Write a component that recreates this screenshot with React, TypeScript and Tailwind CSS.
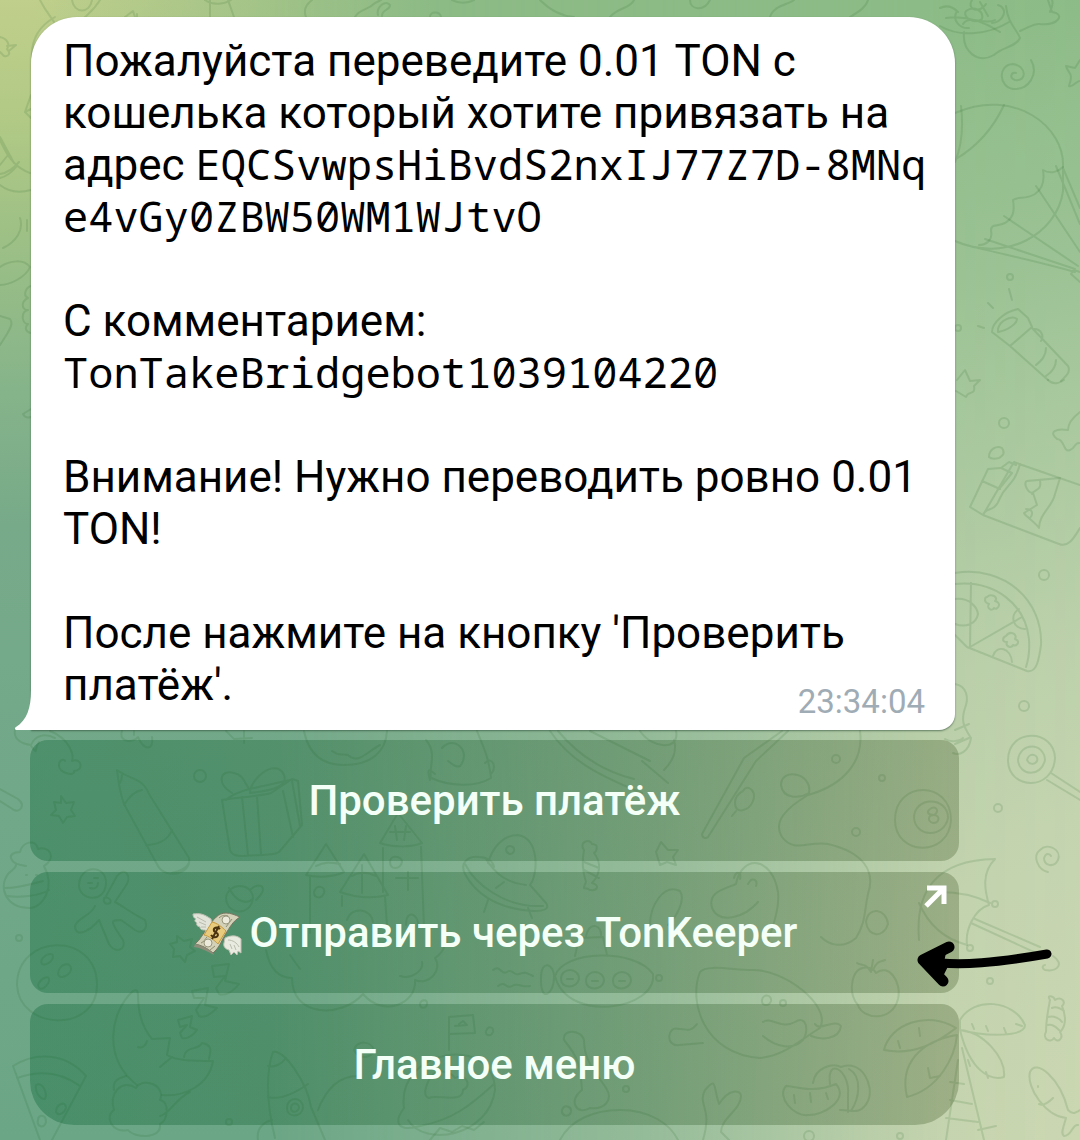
import type { ReactNode } from "react";

const doodles: string[] = [
  // top strip
  "M40 0c6 12 12 18 14 22M72 0c2 14 18 14 20 0M100 0c-6 10-12 14-16 18M55 17c-14 8-24 20-23 40",
  "M125 17l8-6 2 6M137 17v-3M210 0v17M228 0l6 17M205 0c8 6 20 4 26 0M312 0c-8 6-8 12-6 17",
  "M355 17c4-8 12-6 20-14l6-3M378 15c-2-8 8-16 12-10 0 6-8 4-8 11M430 17c0-6 10-6 11 0M452 0c8 4 16 3 22 0",
  "M540 0c10 10 20 16 34 17M610 17c8-10 20-8 24-17M690 0c0 10 14 12 20 0M770 17c4-12 18-12 24-17M850 17c10-6 16-10 18-17",
  // left edge
  "M0 37c8 2 10 8 7 12 4 4 2 8-3 7l-4-4M7 46l9-1-6 5M31 95l-6 17 6 6M25 112l6-3",
  "M0 140c8 18 16 28 30 33M0 137l14 26M0 174c8-1 14-6 19-12M0 178c8-2 13-7 17-12M8 155l-8 10M0 185c10 8 20 8 31 5",
  "M20 218c4 12-4 24-17 30M27 220v11M0 267c10-7 24-8 30 0-4 10-20 18-30 18M31 286c-6 2-8 10-3 12-8 4-6 12 0 12-8 2-6 14 0 14-4 4-2 8 3 9",
  "M0 316l10 3c3 4 1 8-3 15L0 345M31 409l-8 5c2 4 5 4 8 3",
  // rose and leaves
  "M940 8c8-4 14 0 18 4M946 18c20-3 40 5 54 14M957 11c-6 10 4 18 12 17M966 11c8-6 18 0 16 8-8 6-20-2-16-8zM972 0c-6 10 8 14 14 4M980 2l8 14M998 5c12 4 4 18-6 18M963 24c6-10 22 2 32-4",
  "M940 26c20 12 50 8 69-4M964 32c-2 20 14 32 30 23 8-8 22-8 26-17-4-10-12-14-14-32M1020 31c10-4 14-8 20-7 18 2 26-10 12-12l-4-12M1052 0c2 4-1 8-2 12",
  "M1031 60c8 14-2 30-18 29-14-2-16-24 0-25 14 2 14 18 2 16-6-2-4-8 1-7M1080 60l-5 8-9-2c2 8 8 6 3 20 4 2 8-6 11-5",
  // parachute
  "M955 113c60-26 110 14 108 54-4 4-12 8-20 3 2 12-2 20-8 24-10 6-16 2-22 6 2 12 0 18-8 23-8 4-14 0-14 8 2 8-4 14-12 14",
  "M955 241c50 22 102-6 108-50v-24M961 106c3 26 0 42-6 56M1004 105c-12 26-28 42-48 54M955 241c10 6 60 14 120 31M985 239l90 30M1004 216l74 50M1036 186l44 66M1056 166l24 58M1063 168l17 40M1080 272l-6-2-3 4 9 8",
  // flashlight
  "M992 332l18 14 22-19-4-9-10-9c-14 3-26 14-26 23zM998 329c2-9 14-14 19-10 0 4-8 11-19 13zM1010 346l38 34M1032 328l36 38c3 6-2 10-7 15M1034 329c8 0 10 8 7 12M1046 348c0 8-4 12-10 17M1056 360c0 6-4 12-10 16",
  "M1009 289l3 11M988 303l5 5M978 326l6 2M1048 380c4 4 10 4 16 0",
  "M957 380l8-10 5 11 10-1-6 6c2 10-6 4-8 11l-10-6",
  "M1080 412c-8 6-12 12-12 18-12-2-20 2-11 9 8 0 6 14 13 11 6-2 4-8 10-7",
  "M989 457c0-8 8-12 13-9 4 6 0 8-3 10-4 1-8 1-10-1z",
  // chocolate
  "M983 515l31-53 8 3 58 20M983 515l76 29c10 4 16-8 21-16M983 515l-13-8 18-38 12-1M1001 468l8-6 7 3M982 481l18 8M1001 468l11 5-13 16M1020 464c-6 22-14 20-20 34-6 16-14 8-17 17",
  "M1060 478l-33 3c-4 1 0 12 6 12l4 12-13 8c2 4 10 8 15 15 0-14 14-22 16-34zM1040 481c2 10-6 8-8 13M1026 509c6 0 8 4 4 9",
  // pizza right
  "M955 573c50-8 88 28 86 72-2 14-4 28-14 26l-60-24-12-12M955 584c40-4 70 20 74 55 1 14-1 22-3 28M971 583l-1 64 52-30M955 599c14-2 22 8 23 15-2 10-12 14-23 10M1019 609c-10 6-6 20 6 20M993 656c4-12 18-8 19 6",
  "M987 597c4-4 12 0 8 4 8 2 2 10-1 7-2 4-8 0-5-4-6-2-4-7-2-7zM1006 636c4-6 12-2 9 3 6 2 2 8-2 6-2 4-8 1-6-3-6 0-4-5-1-6z",
  "M955 684c12 2 14 14 10 24-4 12-2 18 6 30-2 14-12 18-18 15M963 738c-4 4-14 4-18 1M955 730l14-6M955 744l14-6",
  // lollipop
  "M1008 760c0-32 46-32 47-2-2 34-47 32-47 2zM1018 760c2-18 26-18 27 0-4 18-26 16-27 0zM1027 760c2-8 12-6 10 1-2 4-8 4-10-1zM1051 773l29 19M1047 780l33 20",
  "M1048 872c-10-2-16-16-8-22 8-8 22 0 18 10-4 8-14 6-14-2 2-6 6-4 7-2",
  // umbrella
  "M919 940c-4-48 16-80 76-81-14 14-10 32-6 46-14 4-24 24-22 40-30-8-42-28-48-42M940 892c20 0 36 4 50 11M975 919l65 28M971 923l65 30M1053 956c12 8 4 16-8 14-4-2-2-5 0-5",
  "M1050 1000c-4-6 4-4 5 0 6-4 12 2 7 6 4 10 4 20-2 26 4 6-2 12-6 6-4 6-12 0-8-6 0-10 2-22 4-32zM1052 1008c4-2 8 0 12 3M1048 1017c6-2 12 2 14 5M1048 1025c4-1 8 2 11 5",
  "M1066 1118c-20-2-40-30-36-46 6-14 30 6 38 38 4 4 6 4 12 0M1066 1118c-2 8-6 16-2 18 8 0 8-12 14-11M1039 1104c4 2 10-2 14-6M1038 1086v1",
  "M960 1020c14-24 54-20 65 5 0 12-38 12-65 5zM972 1024l2 5M986 1026l2 5M1004 1028l2 5M1016 1024l6 2M960 1030c24 2 46 28 44 47-14 4-34-6-44-47zM968 1060l2 6M986 1072l2 6M962 1048l22 92M958 1060l-12 80M950 1082l14 2M950 1100l22 4M946 1118l32 4M978 1130l18-4",
  // below bubble
  "M15 730c-2 10 8 14 16 15 4-10 14-12 24-7M31 746c8 10 2 4 8-4M50 731c20 8 24 24 22 30 10-4 12 10 2 10 2 6-16 2-15-6 0-6 6-6 6-4",
  "M122 731c-4 12 12 12 16 6 6 14 16 14 14 0M134 731v4M226 731l8 8 18-1M244 731v12M304 731c4 20 16 34 40 34 28 0 42-14 43-34M332 751c8 6 10 2 16 4 10 10 20-4 32-10",
  "M426 740c12 14 2 28 5 38 18 8 44 10 60 0-2-20-8-32-14-47M430 780c-4-14 0-10 5-6M485 763c8-8 12 6 6 11M442 748c12-14 30 4 18 18-4 2-8-2-12-5",
  "M550 731c20 30 50 45 92 62M558 731c20 24 44 40 76 48M590 731l60 30M640 731c12 18 40 20 36 0M668 783l-26-22M674 740c4 14-4 24-10 30",
  // fishing rod and line
  "M702 834l42-76 38-27M708 837l48-76 32-30M702 834c0 4 4 5 6 3M736 811l-4 5M743 791c4-8 14 0 10 10-4 10-18 14-18 2 0-6 4-10 8-12z",
  "M860 731c4 30-16 54-52 64-20 12-36 26-26 42 12 16 26 4 46 7 34 8 48 26 40 50-4 18-2 28-12 44-14 12-28 6-35-1M809 793c4-20-28-26-28-8 2 14 18 14 28 8",
  "M895 820c0-40 56-40 56 0-2 38-56 36-56 0zM914 818c0-22 34-22 34 0-4 20-32 20-34 0zM930 809c6-4 10 2 4 6-6 0-8-3-4-6zM934 815c6 0 6 8-1 8-6-2-5-8 1-8z",
  // star, crayon, gift, honey pot, gingerbread
  "M0 789l18 10c8 6 2 14-4 11L0 801M61 796l5 7 8-1-3 8 4 6-8 1-4 6-4-7-8-1 5-5-2-8 7 1z",
  "M117 770c2 14 2 20 7 34l34 62c8 14 34 8 31-8l-40-64c-6-16-18-14-32-24zM124 805c6-10 12-14 18-15M146 845c10 0 22-4 26-15M172 873c8-2 14-4 17-10M120 783c2-3 2-5 2-8",
  "M222 800l8 50c2 6 8 6 14 6 20-2 30 0 35-4l23-27-4-44-6-2M222 800c10-2 40-4 49-7l21-14M242 797l6 58M257 796l4 58M283 791l10 46M292 781l8 45M232 793c-16-10-12-24 2-20 10 2 10 10 16 17M250 793c0-14 24-34 33-20 8 14-14 18-33 20zM226 800c10-10 30-12 64-20",
  "M26 866c-18-2-20-14-6-14 2-10 16-14 18-3 10-4 20 8 6 17 12 22-2 42-14 42-24 0-32-20-22-34 4-4 8-6 8-9M5 888c14 0 26-4 38-7M7 896c12 2 32 0 42-6M26 875h1M36 875h1",
  "M79 886c0-22 28-22 27-2-2 20-26 16-27 2zM105 898l12-22c8-10 14 0 10 8l-12 18c8 4 14 10 30 18 4 10-4 14-10 10l-14-10c-10 0-12 0 2 20 4 10-8 14-14 4l-10-24c-10 12-24 18-24 6 2-8 16-10 20-20M88 883h4M94 878h4M90 888c6 2 8-2 8-5M104 898c4-2 8 2 6 5-4 2-7 0-6-5z",
  "M226 898c2-16 26-16 27 0-2 18-26 18-27 0zM250 890c10-10 20-2 6 10M229 888c8 16 20 16 24 10M177 936l7 5 8-2-2 8 5 4-8 4-2 7-5-6-7 1 1-8-4-5 7-2z",
  "M17 985c0-52 80-54 80 0 0 48-78 46-80 0zM42 964c-4-6 10-14 11-8 0 6-8 10-11 8zM58 974c0-10 14-14 13-4-2 6-12 10-13 4zM38 985c2-6 12-12 11-4-2 6-10 12-11 4z",
  // sleeping moon, zzz, pizza slice, rocket
  "M137 1085c-34-26-28-72-4-94 4-2 5 0 5 4 0 14 2 30 14 44l18-1-3 17c10 6 26 6 46 6-4 24-28 36-51 34M160 1067l12-10M184 1057c2-12 14-6 18-14 12 2 8 10 7 16M138 1047c4 2 8-2 9-6",
  "M114 1110c-6-16 8-32 22-22 8-12 30-2 24 12 10 2 8 20 0 24 2 16-26 14-32 6-16 4-24-14-14-20zM160 1116c10-2 16-18 30-24M114 1090c-2-12 8-12 12-14",
  "M178 1020l14-4-2 11 7 3c-6 8-12 9-15 8l-2-5 7-8-7 2zM192 991l16-3-3 17 12 3c-8 8-14 10-18 8l-3-6 8-12-10 0zM212 966l17-2-4 17 14 3c-8 10-14 12-20 10l-3-6 9-12-11 1z",
  "M13 1066l27 74M13 1066c22-14 52-14 73 10l-34 64M17 1078c22-8 44-6 63 8M36 1085c6-4 12 8 9 14-6 0-10-8-9-14zM56 1112c0-8 10-12 10-4-2 6-8 8-10 4zM38 1120c0-6 8-6 8 2-2 8-10 4-8-2z",
  "M275 1138c-10-40-8-70-2-86 10-4 34 30 38 55l14 33M268 1066c6 2 14-2 18-8M268 1097c14 4 30-6 40-13M287 1108c0-12 16-12 16 0-2 10-16 10-16 0zM291 1108c0-6 8-6 8 0-2 5-8 5-8 0zM258 1140c-2-12 6-18 14-20",
  // castle on a cloud
  "M306 875l20-31 18 28c-10 5-26 6-38 3zM310 877v56M340 892l24-38 24 41c-16 4-34 2-48-3zM342 896v10M385 897l3 43M380 843l18-30 24 30c-12 5-30 4-42 0zM383 848v44M421 847l3 80M390 862c0-8 12-6 12 0-2 8-12 8-12 0zM396 878h22M408 872v18M314 892c2-8 12-6 10 1-2 6-10 6-10-1zM347 920c4-14 24-12 26 2M316 866c8-4 14-4 24-2M352 876c8-5 16-4 24 0M362 865v28M395 826l2 14M406 826l-2 14M390 832h20",
  "M266 950c4 20 14 28 26 28 0 40 50 40 71 16 20 24 54 10 52-14 14 6 28-10 20-22 12-8 12-20 8-26M290 955l10 14M400 976c12 4 24-6 22-14M406 925c0-18 14-10 12 2",
  // ufo, candy, star
  "M465 874c-6-12 4-18 14-17 8 0 14 4 15 10l-6-4c4-14 14-28 30-28 22 4 20 40 12 50l16 18c4 6-2 8-12 8-40-2-60-20-69-37zM465 864c10 20 40 44 78 42M486 859c10 16 22 24 40 26M504 882l-8 6M488 900l-4 12M528 908l4 10M506 849c2-5 9-3 8 2-2 5-8 3-8-2z",
  "M584 850c-6-8 6-12 8-6 8 0 4 8 2 9 8 10 6 22-2 30 8 2 6 8-2 7-6-4-8 2-4-8-4-12-4-22-2-32zM584 862l15 6M584 870l15 8M656 852l5-10 7 8 10 0-5 7 3 8-9-3-7 3z",
  // submarine
  "M555 976c8-26 80-28 98-2 4 36-86 50-98 2zM541 978c0-20 14-14 13 0 0 16-14 26-13 0zM561 979c0-12 18-12 18 0-2 10-18 10-18 0zM586 981c0-12 18-12 18 0-2 10-18 10-18 0zM613 981c0-12 18-12 18 0-2 10-18 10-18 0zM567 979h6M592 981h6M619 981h6M575 956l4-18 24-1 4 18M586 936c4-16 16-10 15-1",
  "M493 970c8-6 8 6 14 2s6 4 12 2 6-2 14 2M498 986c8-6 8 4 14 0s10 2 18 0M420 1004c1-5 8-5 7 0-1 5-7 5-7 0z",
  // duck, apple, leaves, pumpkin
  "M768 942c2-10 12-30 10-50-6-36-36-38-42-8-14 6-28 8-24 24 8 18 34 8 46-6M734 878c2-8 8-6 6 1M748 884c4-8 10-4 8 2M700 972c-12 30 4 82 60 86 24-2 40-18 60-30 12-22-36-60-70-58-16 0-44-6-50 2zM697 1024c-8 10-12 4-18 5-12-4-14 18 0 16l24-2M763 1022c8-6 18 8 32 0 12-8 14 10 8 18-10 10-26 8-40-4M815 1024c4 8 20-6 26 2-2 14-20 14-30 10M762 1000c1-6 10-6 9 1-2 6-10 5-9-1z",
  "M852 985c2-22 20-20 24-12 12-10 26 8 22 26-6 24-36 20-40 6-4-4-7-12-6-20zM871 972c-6-10-10-6-14-9M871 972l2-12M873 970c4-10 8-8 12-10M650 925c0-20 14-42 30-34 6 10-4 26-12 34M866 922c2-16 20-14 22 2-4 14-20 14-22-2z",
  "M884 1050c6-26 44-40 72-22-18 14-42 28-72 22zM907 1097c-8-34 14-56 50-62-2 22-18 54-50 62zM930 1078l-2-10M930 1078l10-2M900 1048l-2-7M920 1036l-1-8",
  "M786 1086c10 0 26 8 50-2 14 16-14 32-28 31-14 2-32-18-22-29zM813 1083c2-16 20-20 28-16 20-8 34 18 27 34-8 16-18 8-28 9M830 1084c-4-28 20-14 18 10v18M849 1069c14 8 10 30 2 42M794 1095l1 8M810 1093l1 9M826 1093l2 6",
  // planet with flag, puddle, plant
  "M449 1050v-33l24-2 2 18-25 1M455 1026l12-1M459 1024l4-3 3 3M404 1108c-8-60 90-74 91-18-6 46-70 58-87 30M404 1108c-12 16-4 24 16 18 32-6 50-20 74-42M429 1080c6-14 22-8 26-2 10-6 18 8 8 12 0 14-26 4-34 8-6-2-4-10 0-18z",
  "M564 1040c-2-12 18-10 20 0 0 20 10 30 22 48 8 12-2 22-16 20-14 8-22-8-8-18-2-20 0-28-18-50zM562 1110c2-6 10-4 9 2-2 6-10 4-9-2zM486 1031c2-5 8-5 7 1-2 5-8 4-7-1z",
  "M703 1140c10-34-6-34 2-50 12-14 8-4 14 14 10-16 22-14 22-8 0 14-20 22-20 36l8 8M560 1140c10-20 34-30 60-30 30 0 50 14 58 30M430 1140l10-12 12 4 10-6 12 4 10-8M318 1110c10-26 24-34 40-34M354 1050c2-10 18-10 20 1-4 8-16 8-20-1z",
];

const dots: [number, number, number][] = [
  [1010, 277, 3], [958, 328, 3], [1004, 423, 5], [1044, 575, 5], [1024, 706, 5], [998, 808, 4],
  [995, 904, 3], [970, 948, 3], [990, 981, 3], [200, 776, 6], [19, 938, 3], [229, 1122, 3],
  [836, 759, 4], [882, 778, 3], [856, 832, 4], [659, 978, 3], [783, 1003, 3], [626, 1089, 3],
  [900, 1136, 3], [809, 1136, 5],
];

function Wallpaper() {
  return (
    <div aria-hidden="true" className="absolute inset-0 -z-10 overflow-hidden bg-[linear-gradient(180deg,#c0cf8b_0%,#b0c985_11%,#9bbf86_22%,#86b48a_34%,#77aa89_46%,#71a889_70%,#6ba686_100%)]">
      <div className="absolute inset-0 bg-[radial-gradient(ellipse_62%_40%_at_65%_0%,#8dbb86_40%,transparent_100%)]" />
      <div className="absolute inset-0 bg-[linear-gradient(168deg,#8cbb87_0%,#8cbb87_15%,#9bc294_35%,#abc99f_48%,#bdd1ab_64%,#c6d5b0_80%,#cbd7b1_100%)] [mask-image:linear-gradient(90deg,transparent_25%,rgba(0,0,0,0.45)_60%,rgba(0,0,0,0.95)_88%,black)]" />
      <svg className="absolute left-0 top-0" width="1080" height="1140" viewBox="0 0 1080 1140" fill="none" stroke="#286428" strokeOpacity="0.15" strokeWidth="2" strokeLinecap="round" strokeLinejoin="round">
        {doodles.map((d) => (
          <path key={d} d={d} />
        ))}
        {dots.map(([x, y, r]) => (
          <circle key={`${x}-${y}`} cx={x} cy={y} r={r} />
        ))}
      </svg>
    </div>
  );
}

function MoneyWings() {
  return (
    <svg className="h-[46px] w-[50px] shrink-0" viewBox="0 0 50 46" aria-hidden="true">
      <path d="M15 18C22 9 26 3 34 3c5 0 9 2 14 4-7 4-10 10-15 18-4 7-6 13-12 18C15 38 9 35 3 34c5-4 8-10 12-16z" fill="#d3d1b8" stroke="#77755f" />
      <path d="M3 34c6 1 12 4 18 9l1 2C15 41 9 38 2 37z" fill="#8e8d7a" />
      <path d="M27 8c3-3 6-3 9-2M40 9l-6 8M9 33c3-1 4-4 6-6M23 36l-5 4" stroke="#8f8d70" fill="none" />
      <circle cx="34" cy="10" r="4" fill="#eceadb" stroke="#99977d" />
      <circle cx="16" cy="33" r="4" fill="#eceadb" stroke="#99977d" />
      <path d="M19 9C12 4 8 3 1 4c0 3 1 4 3 5-2 1-1 3 1 4-1 2 0 3 3 4 0 3 3 3 5 3l3 2 4-6z" fill="#e2e3d9" stroke="#bfc1b2" />
      <path d="M5 7l9 5M7 12l7 3M9 17l5 0" stroke="#b9bcae" />
      <path d="M20 12c5 1 10 5 14 9l-8 13c-4-4-9-8-14-9z" fill="#e8cb7c" stroke="#c59a3b" />
      <path d="M28 19c-3-3-7-1-6 2 1 2 4 1 4 4-1 3-5 3-7 0M27 16l-7 13" stroke="#4b3310" strokeWidth="2" fill="none" />
      <path d="M33 28c6-3 12-3 16 1v14l-3-2-1 4-3-3-3 3-2-5c-4-1-6-4-5-7z" fill="#e9eae0" stroke="#c0c2b3" />
      <path d="M36 30c5 0 9 3 11 7M38 34l2 5M42 35l2 5" stroke="#babdad" fill="none" />
    </svg>
  );
}

function KeyboardButton({ children, shape = "rounded-[18px]" }: { children: ReactNode; shape?: string }) {
  return (
    <button
      type="button"
      className={`relative flex h-[121px] w-full items-center justify-center gap-2 bg-[linear-gradient(90deg,rgba(2,95,46,0.33),rgba(28,92,44,0.31)_50%,rgba(65,88,38,0.3))] text-[42px] leading-[52px] font-medium text-[#f4fff8] ${shape}`}
    >
      {children}
    </button>
  );
}

function PenArrow() {
  return (
    <svg className="pointer-events-none absolute -right-24 bottom-1 h-12 w-36" viewBox="0 0 144 48" fill="none" stroke="#000" strokeLinecap="round" strokeLinejoin="round" aria-hidden="true">
      <path d="M38 6L12 19l20 21" strokeWidth="11" />
      <path d="M12 19l22-10-2 10 3 7-5 10z" fill="#000" strokeWidth="3" />
      <path d="M14 20c34 6 76 1 122-7" strokeWidth="9" />
    </svg>
  );
}

export default function App() {
  return (
    <main className="relative isolate min-h-screen overflow-hidden pt-[17px] pr-[121px] pb-[15px] pl-[30px] font-[Roboto,'Noto_Sans',sans-serif]">
      <Wallpaper />

      <article className="relative mr-[4px] ml-px rounded-t-[46px] rounded-br-[16px] bg-white pt-[18px] pr-6 pb-[19px] pl-8 text-[44px] leading-[52px] text-black shadow-[0_1px_2px_rgba(40,70,50,0.6)]">
        <svg className="absolute bottom-0 -left-4 h-12 w-8" viewBox="0 0 32 48" aria-hidden="true">
          <path d="M16 0v8C16 26 12 38 1 45c-2 1-1 3 1 3h30V0z" fill="#fff" />
        </svg>
        <p className="relative">
          Пожалуйста переведите 0.01 TON с кошелька который хотите привязать на адрес{" "}
          <code className="font-['Noto_Sans_Mono','Droid_Sans_Mono','DejaVu_Sans_Mono',monospace] text-[42px] leading-none break-all">
            EQCSvwpsHiBvdS2nxIJ77Z7D-8MNqe4vGy0ZBW50WM1WJtvO
          </code>
        </p>
        <p className="mt-[52px]">
          С комментарием:
          <br />
          <code className="font-['Noto_Sans_Mono','Droid_Sans_Mono','DejaVu_Sans_Mono',monospace] text-[42px] leading-none">
            TonTakeBridgebot1039104220
          </code>
        </p>
        <p className="mt-[52px]">Внимание! Нужно переводить ровно 0.01 TON!</p>
        <p className="mt-[52px]">После нажмите на кнопку 'Проверить платёж'.</p>
        <time className="absolute right-[30px] bottom-2 text-[33px] leading-10 text-[#a0acb5]">23:34:04</time>
      </article>

      <div className="mt-[10px] flex flex-col gap-[11px]">
        <KeyboardButton>Проверить платёж</KeyboardButton>
        <div className="relative">
          <KeyboardButton>
            <MoneyWings />
            <span>Отправить через TonKeeper</span>
            <svg className="absolute top-3 right-3 size-6" viewBox="0 0 24 24" fill="none" stroke="#fff" strokeWidth="5" aria-hidden="true">
              <path d="M4 4h17v16M20 5L3 22" />
            </svg>
          </KeyboardButton>
          <PenArrow />
        </div>
        <KeyboardButton shape="rounded-t-[18px] rounded-b-[44px]">Главное меню</KeyboardButton>
      </div>
    </main>
  );
}
